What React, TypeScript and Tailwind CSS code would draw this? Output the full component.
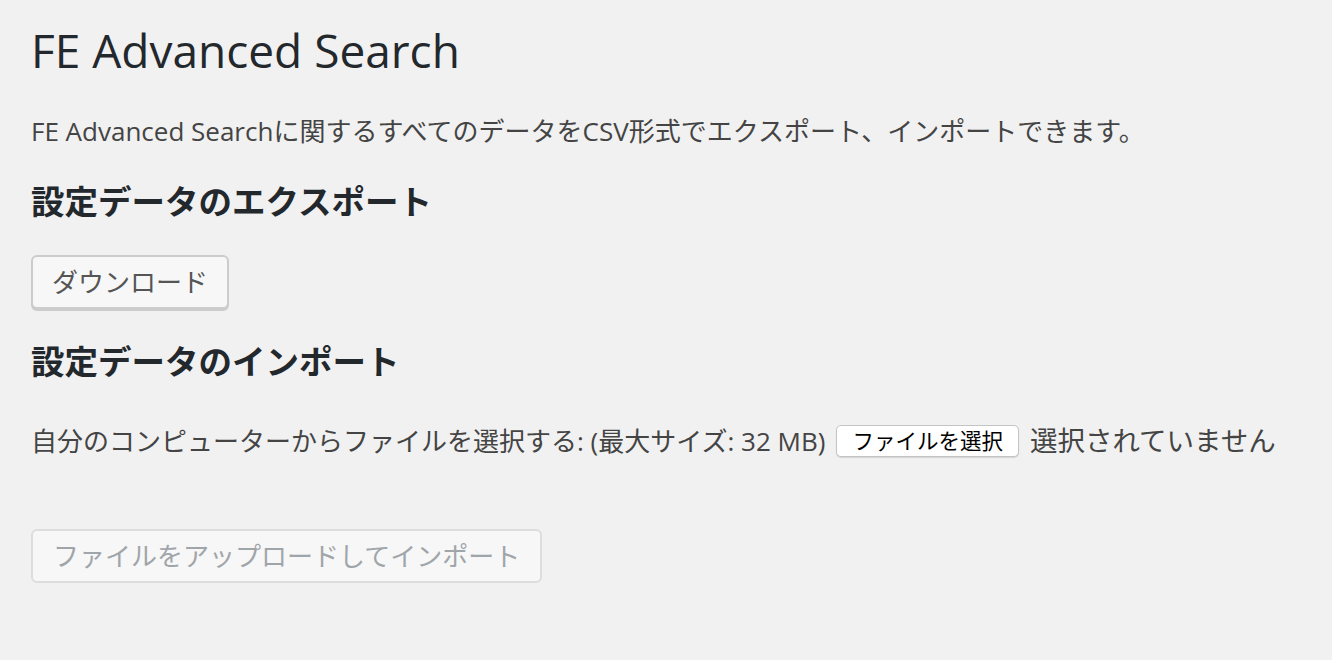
import React from "react";

const font = "font-['Open_Sans','Noto_Sans_CJK_JP',sans-serif]";

function WpButton({ children, disabled }: { children: React.ReactNode; disabled?: boolean }) {
  return (
    <button
      type="button"
      disabled={disabled}
      className={
        disabled
          ? "h-[54px] px-[20px] rounded-[6px] border-2 border-[#dddddd] bg-[#f7f7f7] text-[26px] leading-[50px] text-[#a0a5aa] whitespace-nowrap"
          : "h-[54px] px-[19px] rounded-[6px] border-2 border-[#cccccc] bg-[#f7f7f7] text-[26px] leading-[50px] text-[#555555] shadow-[0_2px_0_#cccccc] whitespace-nowrap"
      }
    >
      {children}
    </button>
  );
}

export default function App() {
  return (
    <div className={`min-h-screen w-full bg-[#f1f1f1] ${font}`}>
      <div className="pl-[31px] pt-[20px]">
        {/* Page title */}
        <h1 className="text-[46px] leading-[60px] font-normal text-[#23282d]">FE Advanced Search</h1>

        <p className="mt-[32px] text-[26px] leading-[38px] text-[#444444] whitespace-nowrap">
          FE Advanced Searchに関するすべてのデータをCSV形式でエクスポート、インポートできます。
        </p>

        {/* Export */}
        <h2 className="mt-[29px] text-[33.5px] leading-[44px] font-bold text-[#23282d]">設定データのエクスポート</h2>
        <div className="mt-[32px]">
          <WpButton>ダウンロード</WpButton>
        </div>

        {/* Import */}
        <h2 className="mt-[30px] text-[33.5px] leading-[44px] font-bold text-[#23282d]">設定データのインポート</h2>
        <div className="mt-[39px] flex items-center h-[38px] text-[26px] text-[#444444] whitespace-nowrap">
          <span>自分のコンピューターからファイルを選択する: (最大サイズ: 32 MB)</span>
          <button
            type="button"
            className="ml-[11px] h-[32px] px-[15px] rounded-[5px] border border-[#c4c4c4] bg-white text-[21.5px] leading-[30px] text-black shadow-[0_1px_1px_rgba(0,0,0,0.12)]"
          >
            ファイルを選択
          </button>
          <span className="ml-[11px] text-[27.5px] text-[#444444]">選択されていません</span>
        </div>

        <div className="mt-[69px]">
          <WpButton disabled>ファイルをアップロードしてインポート</WpButton>
        </div>
      </div>
    </div>
  );
}
